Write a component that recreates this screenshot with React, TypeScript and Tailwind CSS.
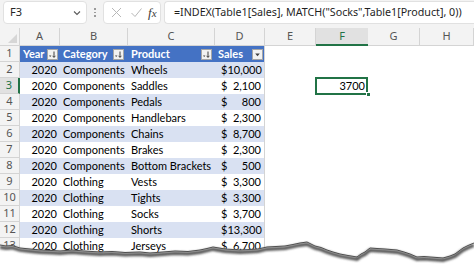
import React from 'react';

type Row = [string, string, string, string];

const rows: Row[] = [
  ['2020', 'Components', 'Wheels', '$10,000'],
  ['2020', 'Components', 'Saddles', '2,100'],
  ['2020', 'Components', 'Pedals', '800'],
  ['2020', 'Components', 'Handlebars', '2,300'],
  ['2020', 'Components', 'Chains', '8,700'],
  ['2020', 'Components', 'Brakes', '2,300'],
  ['2020', 'Components', 'Bottom Brackets', '500'],
  ['2020', 'Clothing', 'Vests', '3,300'],
  ['2020', 'Clothing', 'Tights', '3,300'],
  ['2020', 'Clothing', 'Socks', '3,700'],
  ['2020', 'Clothing', 'Shorts', '$13,300'],
  ['2020', 'Clothing', 'Jerseys', '6,700'],
];

const cols = ['A', 'B', 'C', 'D', 'E', 'F', 'G', 'H'];

const edge: [number, number][] = [
  [0, 245], [6, 246], [12, 245.5], [20, 248], [30, 249], [40, 250], [52, 250.5], [60, 251], [72, 250], [84, 251],
  [100, 252], [112, 251.5], [125, 252.5], [140, 252], [150, 253], [163, 252], [175, 251], [188, 251.5], [200, 250],
  [207, 248.5], [213, 247], [219, 248], [225, 249], [240, 250], [250, 249.5], [258, 249], [267, 247], [276, 246.5],
  [285, 246], [293, 244.5], [300, 243], [307, 242], [311, 244], [315, 246], [321, 247.5], [327, 250], [333, 252],
  [340, 254], [348, 255.5], [357, 257], [361, 254], [365, 252], [370, 248], [377, 248.5], [385, 249], [397, 250],
  [404, 252], [410, 254], [417, 257], [424, 256.5], [430, 257], [437, 257.5], [443, 258], [450, 256], [455, 254],
  [459, 251], [463, 248], [468, 245.5], [474, 243],
];

function SortButton({ sorted }: { sorted: boolean }) {
  return (
    <span className="flex h-[11px] w-[11px] shrink-0 items-center justify-center border border-[#a6a6a6] bg-[#f2f2f2]">
      <svg width="9" height="9" viewBox="0 0 9 9">
        {sorted ? (
          <>
            <path d="M1 5.5 L3.4 5.5 L2.2 7 Z" fill="#404040" />
            <path d="M6 1.5 V7.2 M4.6 5.8 L6 7.4 L7.4 5.8" stroke="#404040" strokeWidth="1" fill="none" />
          </>
        ) : (
          <path d="M2.2 3.5 L6.8 3.5 L4.5 6.2 Z" fill="#404040" />
        )}
      </svg>
    </span>
  );
}

function TornEdge() {
  const top = 236;
  const pts = edge.map(([x, y]) => `${x},${y - top}`).join(' L');
  const fill = `M${pts} L474,40 L0,40 Z`;
  const line = `M${pts}`;
  return (
    <svg className="pointer-events-none absolute left-0 top-[236px]" width="474" height="30" viewBox="0 0 474 30">
      <defs>
        <filter id="blur" x="-5%" y="-50%" width="110%" height="200%">
          <feGaussianBlur stdDeviation="1.3" />
        </filter>
      </defs>
      <path d={fill} fill="#ffffff" />
      <path d={line} transform="translate(0,2.2)" stroke="#555555" strokeWidth="3.4" fill="none" filter="url(#blur)" />
      <path d={line} stroke="#505050" strokeWidth="1" fill="none" />
    </svg>
  );
}

export default function App() {
  const cellFont = { fontFamily: 'Lato, "Liberation Sans", sans-serif' };
  return (
    <div className="relative h-[266px] w-[474px] overflow-hidden bg-white" style={{ fontFamily: '"Noto Sans", "Open Sans", sans-serif' }}>
      {/* formula bar */}
      <div className="flex h-[28px] items-start gap-0 bg-[#f3f3f3] pt-[1px]">
        <div className="ml-[3px] flex h-[23px] w-[84px] items-center justify-between rounded-[4px] border border-[#e1e1e1] bg-white pl-[6px] pr-[4px] text-[11px] text-[#262626]">
          <span>F3</span>
          <svg width="10" height="10" viewBox="0 0 10 10">
            <path d="M2 3.5 L5 6.5 L8 3.5" stroke="#5a5a5a" strokeWidth="1.1" fill="none" />
          </svg>
        </div>
        <div className="flex h-[23px] w-[16px] flex-col items-center justify-center gap-[2px]">
          <span className="h-[1.5px] w-[1.5px] bg-[#9a9a9a]" />
          <span className="h-[1.5px] w-[1.5px] bg-[#9a9a9a]" />
          <span className="h-[1.5px] w-[1.5px] bg-[#9a9a9a]" />
        </div>
        <div className="flex h-[23px] w-[58px] items-center rounded-[4px] border border-[#e1e1e1] bg-white pl-[6px]">
          <svg width="13" height="13" viewBox="0 0 13 13">
            <path d="M2 2 L11 11 M11 2 L2 11" stroke="#b8b8b8" strokeWidth="1" fill="none" />
          </svg>
          <svg className="ml-[7px]" width="13" height="13" viewBox="0 0 13 13">
            <path d="M1.5 7 L5 10.5 L11.5 2.5" stroke="#b8b8b8" strokeWidth="1" fill="none" />
          </svg>
          <span className="ml-[5px] text-[13px] italic leading-none text-[#3a3a3a]" style={{ fontFamily: '"Liberation Serif", serif' }}>
            f<span className="text-[11px]">x</span>
          </span>
        </div>
        <div className="ml-[3px] flex h-[23px] flex-1 items-center rounded-l-[4px] border border-r-0 border-[#e1e1e1] bg-white pl-[9px] text-[10.7px] text-[#1f1f1f]">
          =INDEX(Table1[Sales], MATCH("Socks",Table1[Product], 0))
        </div>
      </div>

      {/* sheet */}
      <div className="grid grid-cols-[20px_40px_68px_87px_50px_51px_52px_52px_54px]">
        {/* column headers */}
        <div className="relative h-[18px] border-r border-b border-[#d4d4d4] bg-[#f3f3f3]">
          <svg className="absolute bottom-[2px] right-[2px]" width="9" height="9" viewBox="0 0 9 9">
            <path d="M9 0 L9 9 L0 9 Z" fill="#d6d6d6" />
          </svg>
        </div>
        {cols.map((c) => (
          <div
            key={c}
            className={
              c === 'F'
                ? 'flex h-[18px] items-center justify-center border-b-2 border-[#217346] bg-[#e1e1e1] text-[11px] text-[#217346]'
                : 'flex h-[18px] items-center justify-center border-r border-b border-[#d4d4d4] bg-[#f3f3f3] text-[11px] text-[#555]'
            }
          >
            {c}
          </div>
        ))}

        {/* row 1: table header */}
        <div className="flex h-4 items-center justify-center border-r border-b border-[#d4d4d4] bg-[#f3f3f3] text-[11px] text-[#555]">1</div>
        <div className="flex h-4 items-center justify-between bg-[#4472c4] pl-[3px] pr-[2px] text-[11px] font-bold text-white" style={cellFont}>
          <span>Year</span>
          <SortButton sorted />
        </div>
        <div className="flex h-4 items-center justify-between bg-[#4472c4] pl-[3px] pr-[4px] text-[11px] font-bold text-white" style={cellFont}>
          <span>Category</span>
          <SortButton sorted />
        </div>
        <div className="flex h-4 items-center justify-between bg-[#4472c4] pl-[3px] pr-[3px] text-[11px] font-bold text-white" style={cellFont}>
          <span>Product</span>
          <SortButton sorted />
        </div>
        <div className="flex h-4 items-center justify-between border-r border-[#d4d4d4] bg-[#4472c4] pl-[3px] pr-[1px] text-[11px] font-bold text-white" style={cellFont}>
          <span>Sales</span>
          <SortButton sorted={false} />
        </div>
        <div className="h-4" />
        <div className="h-4" />
        <div className="h-4" />
        <div className="h-4" />

        {rows.map((r, i) => {
          const n = i + 2;
          const band = i % 2 === 0 ? 'bg-[#d9e1f2]' : 'bg-white';
          const dollarJoined = r[3].startsWith('$');
          return (
            <React.Fragment key={n}>
              <div
                className={
                  n === 3
                    ? 'flex h-4 items-center justify-center border-r-2 border-b border-r-[#217346] border-b-[#d4d4d4] bg-[#e1e1e1] text-[11px] text-[#217346]'
                    : 'flex h-4 items-center justify-center border-r border-b border-[#d4d4d4] bg-[#f3f3f3] text-[11px] text-[#555]'
                }
              >
                {n}
              </div>
              <div className={`flex h-4 items-center justify-end pr-[3px] text-[11px] text-black ${band}`} style={cellFont}>
                {r[0]}
              </div>
              <div className={`flex h-4 items-center pl-[3px] text-[11px] text-black ${band}`} style={cellFont}>
                {r[1]}
              </div>
              <div className={`flex h-4 items-center pl-[3px] text-[11px] text-black ${band}`} style={cellFont}>
                {r[2]}
              </div>
              <div className={`flex h-4 items-center justify-between border-r border-[#d4d4d4] pl-[6px] pr-[3px] text-[11px] text-black ${band}`} style={cellFont}>
                <span>$</span>
                <span>{dollarJoined ? r[3].slice(1) : r[3]}</span>
              </div>
              <div className="h-4" />
              {n === 3 ? (
                <div className="relative flex h-4 items-center justify-end pr-[3px] text-[11px] text-black" style={cellFont}>
                  <span className="absolute -left-[1px] -top-[1px] h-[18px] w-[53px] border-2 border-[#217346]" />
                  <span className="absolute -bottom-[3px] -right-[3px] h-[5px] w-[5px] border border-white bg-[#217346]" />
                  3700
                </div>
              ) : (
                <div className="h-4" />
              )}
              <div className="h-4" />
              <div className="h-4" />
            </React.Fragment>
          );
        })}
      </div>

      <TornEdge />
    </div>
  );
}
